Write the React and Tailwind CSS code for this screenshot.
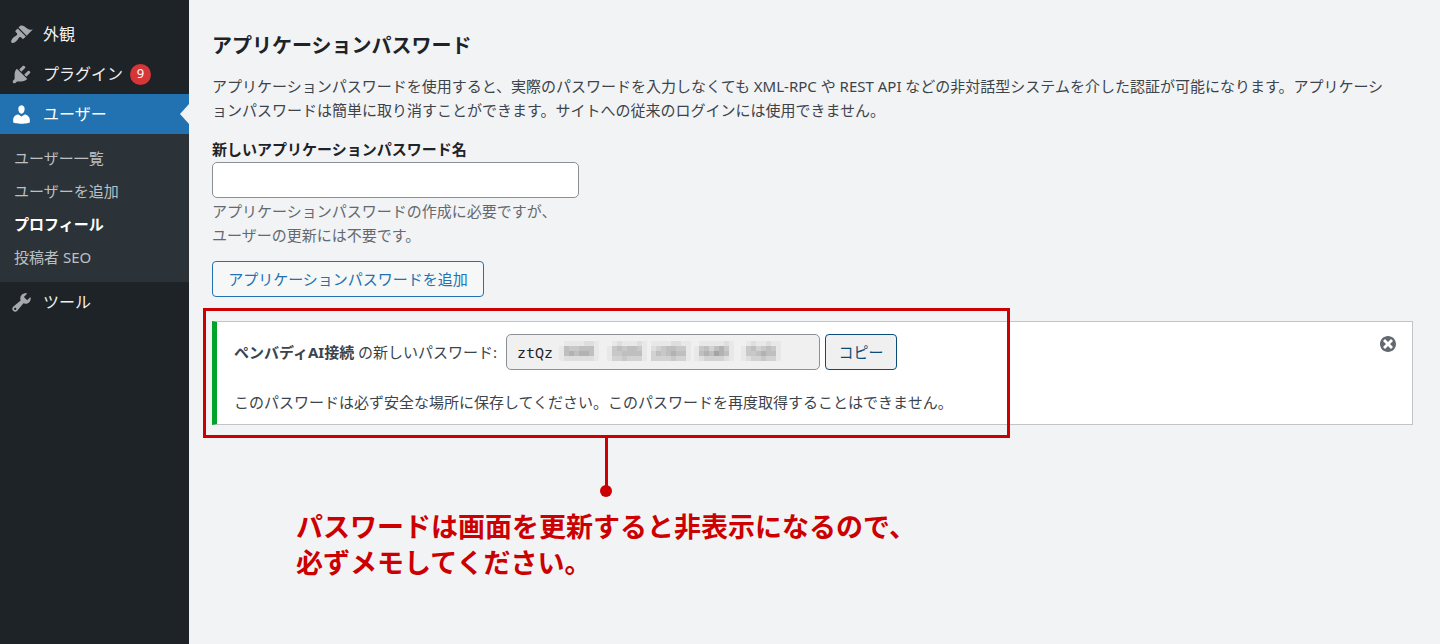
import React from 'react';

const icons = {
  appearance:
    'M14.48 11.06L7.41 3.99l1.5-1.5c.5-.56 2.3-.47 3.51.32 1.21.8 1.43 1.28 2.91 2.1 1.18.64 2.45 1.26 4.45.85zm-.71.71L6.7 4.7 4.93 6.47c-.39.39-.39 1.02 0 1.41l1.06 1.06c.39.39.39 1.03 0 1.42-.6.6-1.43 1.11-2.21 1.69-.35.26-.7.53-1.01.84C1.43 14.23.4 16.08 1.4 17.07c.99 1 2.84-.03 4.18-1.36.31-.31.58-.66.85-1.02.57-.78 1.08-1.61 1.69-2.21.39-.39 1.02-.39 1.41 0l1.06 1.06c.39.39 1.02.39 1.41 0z',
  plugins:
    'M13.11 4.36L9.87 7.6 8 5.73l3.24-3.24c.35-.34 1.05-.2 1.56.32.52.51.66 1.21.31 1.55zm-8 1.77l.91-1.12 9.01 9.01-1.19.84c-.71.71-2.63 1.16-3.82 1.16H6.14L4.9 17.26c-.59.59-1.54.59-2.12 0-.59-.58-.59-1.53 0-2.12l1.24-1.24v-3.88c0-1.13.4-3.19 1.09-3.89zm7.26 3.97l3.24-3.24c.34-.35 1.04-.21 1.55.31.52.51.66 1.21.31 1.55l-3.24 3.25z',
  users:
    'M10 9.25c-2.27 0-2.73-3.44-2.73-3.44C7 4.02 7.82 2 9.97 2c2.16 0 2.98 2.02 2.71 3.81 0 0-.41 3.44-2.68 3.44zm0 2.57L12.72 10c2.39 0 4.52 2.33 4.52 4.53v2.49s-3.65 1.13-7.24 1.13c-3.65 0-7.24-1.13-7.24-1.13v-2.49c0-2.25 1.94-4.48 4.47-4.48z',
  tools:
    'M16.68 9.77c-1.34 1.34-3.3 1.67-4.95.99l-5.41 6.52c-.99.99-2.59.99-3.58 0s-.99-2.59 0-3.57l6.52-5.42c-.68-1.65-.35-3.61.99-4.95 1.28-1.28 3.12-1.62 4.72-1.06l-2.89 2.89 2.82 2.82 2.86-2.87c.53 1.58.18 3.39-1.08 4.65zM3.81 16.21c.4.39 1.04.39 1.43 0 .4-.4.4-1.04 0-1.43-.39-.4-1.03-.4-1.43 0-.39.39-.39 1.03 0 1.43z',
  dismiss:
    'M10 2c4.42 0 8 3.58 8 8s-3.58 8-8 8-8-3.58-8-8 3.58-8 8-8zm5 11l-3-3 3-3-2-2-3 3-3-3-2 2 3 3-3 3 2 2 3-3 3 3z',
};

const Icon = ({ name, className }) => (
  <svg viewBox="0 0 20 20" fill="currentColor" className={className} aria-hidden="true">
    <path d={icons[name]} />
  </svg>
);

const submenu = [
  { label: 'ユーザー一覧' },
  { label: 'ユーザーを追加' },
  { label: 'プロフィール', current: true },
  { label: '投稿者 SEO' },
];

// grey level of each mosaic cell, one string per row
const groups = [
  { x: 0, rows: ['01111221', '15445551', '15656651', '12222221'] },
  { x: 48, rows: ['01211121', '14545541', '14455551', '13343331'] },
  { x: 92, rows: ['11112211', '23455441', '35456551', '33334331'] },
  { x: 135, rows: ['01111121', '14535641', '15657651', '12333321'] },
  { x: 182, rows: ['01211211', '14534541', '14456551', '12334331'] },
];
const greys = ['#f0f0f1', '#e8e8e9', '#dededf', '#d2d2d3', '#c8c8c9', '#bfbfc0', '#b2b2b3', '#a4a4a6'];

const Mosaic = () => (
  <svg
    viewBox="0 0 224 20"
    shapeRendering="crispEdges"
    className="pointer-events-none absolute left-[53px] top-[7px] h-5 w-56"
    aria-hidden="true"
  >
    {groups.map((g) =>
      g.rows.map((row, y) =>
        [...row].map((v, x) => (
          <rect key={`${g.x}-${y}-${x}`} x={g.x + x * 5} y={y * 5} width="5" height="5" fill={greys[v]} />
        ))
      )
    )}
  </svg>
);

const MenuItem = ({ icon, label, count, current }) => (
  <a
    href="#"
    aria-current={current ? 'true' : undefined}
    className={
      current
        ? 'relative flex h-10 items-center gap-2.5 bg-[#2271b1] pl-2.5 text-white'
        : 'relative flex h-10 items-center gap-2.5 pl-2.5 text-[#f0f0f1]'
    }
  >
    <Icon name={icon} className={current ? 'size-[23px] text-white' : 'size-[23px] text-[#a7aaad]'} />
    <span className="text-base">{label}</span>
    {count && (
      <span className="-ml-[3px] flex size-[21px] items-center justify-center rounded-full bg-[#d63638] text-[13px] text-white">
        {count}
      </span>
    )}
    {current && (
      <span className="absolute right-0 top-1/2 -translate-y-1/2 border-y-10 border-r-9 border-y-transparent border-r-[#f2f3f5]" />
    )}
  </a>
);

const Sidebar = () => (
  <nav className="w-[189px] shrink-0 bg-[#1d2327] pt-[14px]">
    <MenuItem icon="appearance" label="外観" />
    <MenuItem icon="plugins" label="プラグイン" count={9} />
    <MenuItem icon="users" label="ユーザー" current />
    <ul className="bg-[#2c3338] py-2 text-[15px]">
      {submenu.map((item) => (
        <li key={item.label}>
          <a
            href="#"
            className={
              item.current
                ? 'block pl-[14px] leading-[33px] font-bold text-white'
                : 'block pl-[14px] leading-[33px] text-[#bcc0c4]'
            }
          >
            {item.label}
          </a>
        </li>
      ))}
    </ul>
    <MenuItem icon="tools" label="ツール" />
  </nav>
);

const Notice = () => (
  <div className="relative mt-6 border border-l-5 border-[#c3c4c7] border-l-[#00a32a] bg-white px-[17px] pt-3 pb-2.5">
    <div className="flex items-center">
      <label htmlFor="new-password" className="mr-[9px] whitespace-nowrap">
        <strong>ペンバディAI接続</strong> の新しいパスワード:
      </label>
      <div className="relative mr-[5px] w-[314px]">
        <input
          id="new-password"
          type="text"
          readOnly
          defaultValue="ztQz"
          className="block h-9 w-full rounded-[5px] border border-[#8c8f94] bg-[#f0f0f1] px-[10px] font-['Noto_Sans_Mono','DejaVu_Sans_Mono',monospace] text-[15px] text-[#1d2327]"
        />
        <Mosaic />
      </div>
      <button type="button" className="h-9 w-[72px] rounded border border-[#0a4b78] bg-[#f0f0f1] text-[#0a4b78]">
        コピー
      </button>
    </div>
    <p className="mt-5 leading-6">
      このパスワードは必ず安全な場所に保存してください。このパスワードを再度取得することはできません。
    </p>
    <button type="button" aria-label="閉じる" className="absolute right-[14px] top-3 text-[#646970]">
      <Icon name="dismiss" className="size-5" />
    </button>
    {/* callout frame with its pointer */}
    <div className="pointer-events-none absolute -left-[14px] -top-[14px] -bottom-[14px] w-[807px] border-3 border-[#cc0000]">
      <span className="absolute left-[399px] top-full h-14 w-[3px] bg-[#cc0000]" />
      <span className="absolute left-[394px] top-full mt-[50px] size-3 rounded-full bg-[#cc0000]" />
    </div>
  </div>
);

export default function App() {
  return (
    <div className="flex min-h-screen bg-[#f2f3f5] font-['Noto_Sans','Noto_Sans_CJK_JP',sans-serif] text-[15px] text-[#3c434a]">
      <Sidebar />
      <main className="min-w-0 flex-1 pt-[34px] pr-[27px] pl-[23px]">
        <h2 className="text-xl leading-6 font-bold text-[#1d2327]">アプリケーションパスワード</h2>
        <p className="mt-4 leading-6">
          アプリケーションパスワードを使用すると、実際のパスワードを入力しなくても XML-RPC や REST API などの非対話型システムを介した認証が可能になります。アプリケーシ
          <br />
          ョンパスワードは簡単に取り消すことができます。サイトへの従来のログインには使用できません。
        </p>
        <label htmlFor="app-name" className="mt-[15px] block leading-6 font-bold text-[#1d2327]">
          新しいアプリケーションパスワード名
        </label>
        <input
          id="app-name"
          type="text"
          className="mt-px block h-9 w-[367px] rounded-[5px] border border-[#8c8f94] bg-white px-[10px]"
        />
        <p className="mt-px leading-6 text-[#646970]">
          アプリケーションパスワードの作成に必要ですが、
          <br />
          ユーザーの更新には不要です。
        </p>
        <button
          type="button"
          className="mt-[14px] block h-9 w-[272px] rounded border border-[#2271b1] bg-[#f6f7f7] text-[#2271b1]"
        >
          アプリケーションパスワードを追加
        </button>
        <Notice />
        <p className="mt-[84px] ml-[84px] text-[27px] leading-9 font-bold text-[#cc0000]">
          パスワードは画面を更新すると非表示になるので、
          <br />
          必ずメモしてください。
        </p>
      </main>
    </div>
  );
}
